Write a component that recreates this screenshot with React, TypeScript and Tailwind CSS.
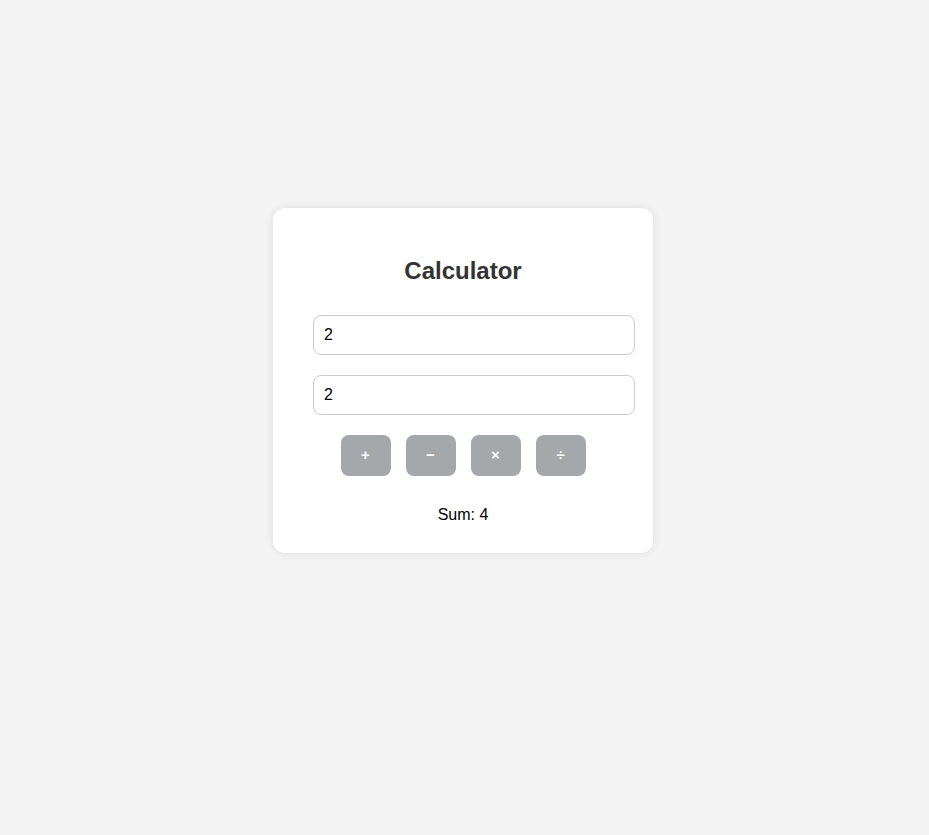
import { useState } from 'react';

const ops: { sym: string; label: string }[] = [
  { sym: '+', label: 'Sum' },
  { sym: '−', label: 'Difference' },
  { sym: '×', label: 'Product' },
  { sym: '÷', label: 'Quotient' },
];

export default function App() {
  const [a, setA] = useState('2');
  const [b, setB] = useState('2');
  const [result, setResult] = useState('Sum: 4');

  const run = (sym: string, label: string) => {
    const x = parseFloat(a);
    const y = parseFloat(b);
    let r = 0;
    if (sym === '+') r = x + y;
    else if (sym === '−') r = x - y;
    else if (sym === '×') r = x * y;
    else r = x / y;
    setResult(`${label}: ${r}`);
  };

  return (
    <div className="min-h-screen w-full bg-[#f4f4f4] flex justify-center pt-[208px] pr-[3px] font-['Liberation_Sans',Arial,sans-serif]">
      <div className="w-[380px] h-[345px] bg-white rounded-xl shadow-[0_0_10px_rgba(0,0,0,0.1)] pt-[49px] px-[40px] flex flex-col">
        <h2 className="text-center text-[24px] leading-[28px] font-bold text-[#333]">Calculator</h2>

        <input
          value={a}
          onChange={(e) => setA(e.target.value)}
          className="mt-[30px] w-[322px] h-[40px] px-[10px] border border-[#ccc] rounded-lg text-[16px] text-black outline-none"
        />
        <input
          value={b}
          onChange={(e) => setB(e.target.value)}
          className="mt-[20px] w-[322px] h-[40px] px-[10px] border border-[#ccc] rounded-lg text-[16px] text-black outline-none"
        />

        {/* operator buttons */}
        <div className="mt-[20px] flex justify-center gap-[15px]">
          {ops.map((op) => (
            <button
              key={op.sym}
              onClick={() => run(op.sym, op.label)}
              className="w-[50px] h-[41px] rounded-lg bg-[#a5a8ab] text-white text-[15px] font-bold flex items-center justify-center"
            >
              {op.sym}
            </button>
          ))}
        </div>

        <p className="mt-[30px] text-center text-[16px] leading-[18px] text-black">{result}</p>
      </div>
    </div>
  );
}
